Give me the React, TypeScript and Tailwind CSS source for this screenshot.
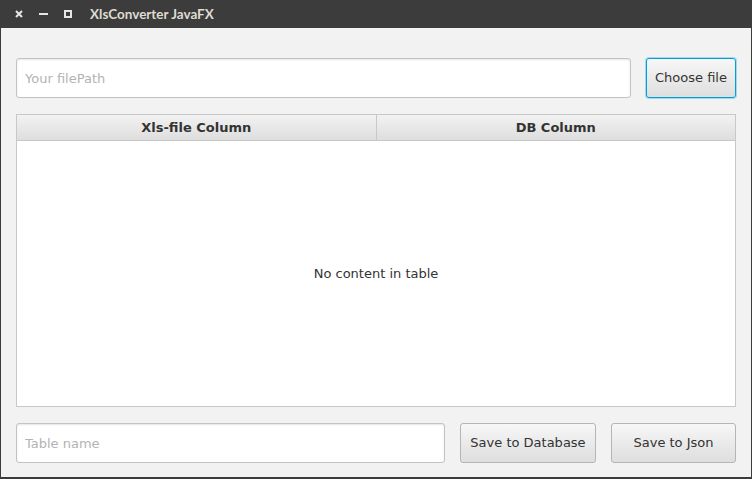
import React, { useState } from 'react';

const btnBase =
  'h-10 rounded-[3px] border bg-gradient-to-b from-[#f7f7f7] to-[#dedede] text-[13px] text-[#333]';

const field =
  'h-10 rounded-[3px] border border-[#c2c2c2] bg-white px-2 text-[13px] text-[#333] shadow-[inset_0_1px_2px_#e6e6e6] placeholder:text-[#b3b3b3] focus:outline-none';

export default function App() {
  const [filePath, setFilePath] = useState('');
  const [tableName, setTableName] = useState('');

  return (
    <div className="flex h-[479px] w-[752px] flex-col font-['DejaVu_Sans',sans-serif]">
      {/* title bar */}
      <div className="flex h-7 shrink-0 items-center bg-[#3c3c3c] text-[#dfdbd2]">
        <div className="ml-[15px] flex w-[57px] items-center justify-between">
          <svg width="8" height="8" viewBox="0 0 8 8">
            <path d="M1 1L7 7M7 1L1 7" stroke="#e6e6e6" strokeWidth="2" />
          </svg>
          <svg width="9" height="8" viewBox="0 0 9 8">
            <path d="M0 4H9" stroke="#e6e6e6" strokeWidth="2" />
          </svg>
          <svg width="8" height="8" viewBox="0 0 8 8">
            <rect x="1" y="1" width="6" height="6" fill="none" stroke="#e6e6e6" strokeWidth="2" />
          </svg>
        </div>
        <span className="ml-[18px] font-['Lato',sans-serif] text-[13.5px] font-bold">XlsConverter JavaFX</span>
      </div>

      {/* body */}
      <div className="flex min-h-0 flex-1 flex-col border-x border-b-2 border-[#3c3c3c] bg-[#f2f2f2] px-[15px] pt-[30px] pb-[14px]">
        <div className="flex gap-[15px]">
          <input
            value={filePath}
            onChange={(e) => setFilePath(e.target.value)}
            placeholder="Your filePath"
            className={field + ' flex-1'}
          />
          <button className={btnBase + ' w-[90px] border-[#039ed3] shadow-[0_0_0_1px_#9fdaf0]'}>
            Choose file
          </button>
        </div>

        <div className="mt-4 flex min-h-0 flex-1 flex-col border border-[#c8c8c8] bg-white">
          <div className="flex h-[26px] shrink-0 border-b border-[#c8c8c8] bg-gradient-to-b from-[#f2f2f2] to-[#dedede] text-[13px] font-bold text-[#333]">
            <div className="flex flex-1 items-center justify-center border-r border-[#c8c8c8]">Xls-file Column</div>
            <div className="flex flex-1 items-center justify-center">DB Column</div>
          </div>
          <div className="flex flex-1 items-center justify-center text-[13px] text-[#333]">
            No content in table
          </div>
        </div>

        <div className="mt-4 flex gap-[15px]">
          <input
            value={tableName}
            onChange={(e) => setTableName(e.target.value)}
            placeholder="Table name"
            className={field + ' flex-1'}
          />
          <button className={btnBase + ' w-[136px] border-[#b5b5b5]'}>Save to Database</button>
          <button className={btnBase + ' w-[125px] border-[#b5b5b5]'}>Save to Json</button>
        </div>
      </div>
    </div>
  );
}
